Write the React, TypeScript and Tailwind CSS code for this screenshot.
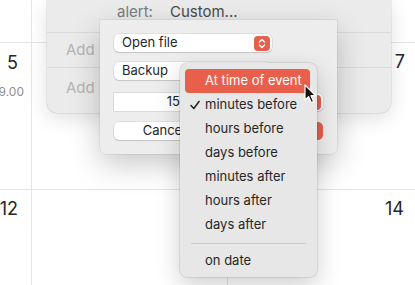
const menuItems = [
  "minutes before",
  "hours before",
  "days before",
  "minutes after",
  "hours after",
  "days after",
];

function Stepper() {
  return (
    <span className="flex h-[15px] w-[16px] items-center justify-center rounded-[4px] bg-[#e5604d]">
      <svg width="8" height="11" viewBox="0 0 8 11" fill="none" stroke="white" strokeWidth="1.4" strokeLinecap="round" strokeLinejoin="round">
        <path d="M1.5 4 L4 1.5 L6.5 4" />
        <path d="M1.5 7 L4 9.5 L6.5 7" />
      </svg>
    </span>
  );
}

function Popup({ label, className }: { label?: string; className: string }) {
  return (
    <div className={`flex h-[18px] items-center justify-between rounded-[5px] bg-white pl-[8px] pr-[2px] text-[13px] shadow-[0_0_0_0.5px_rgba(0,0,0,0.12),0_1px_1px_rgba(0,0,0,0.12)] ${className}`}>
      <span>{label}</span>
      <Stepper />
    </div>
  );
}

export default function App() {
  return (
    <div className="relative h-[285px] w-[415px] overflow-hidden bg-white font-['Inter',sans-serif] text-[#262626]">
      {/* calendar month grid */}
      <div className="grid h-full grid-cols-[32px_196px_1fr] grid-rows-[43px_147px_1fr]">
        <div className="border-r border-b border-[#e6e6e6]" />
        <div className="border-r border-b border-[#e6e6e6]" />
        <div className="border-b border-[#e6e6e6]" />

        <div className="flex flex-col items-end border-r border-b border-[#e6e6e6] pt-[9px] pr-[13px]">
          <span className="text-[18px] leading-[22px]">5</span>
          <span className="mt-[10px] mr-[-6px] text-[12px] leading-[16px] text-[#8f8f8f]">19.00</span>
        </div>
        <div className="border-r border-b border-[#e6e6e6]" />
        <div className="flex justify-end border-b border-[#e6e6e6] pt-[8px] pr-[10px]">
          <span className="text-[18px] leading-[22px]">7</span>
        </div>

        <div className="flex justify-end border-r border-[#e6e6e6] pt-[8px] pr-[13px]">
          <span className="text-[18px] leading-[22px]">12</span>
        </div>
        <div className="border-r border-[#e6e6e6]" />
        <div className="flex justify-end pt-[8px] pr-[11px]">
          <span className="text-[18px] leading-[22px]">14</span>
        </div>
      </div>

      {/* event popover behind */}
      <div className="absolute top-0 left-[47px] flex h-[113px] w-[344px] flex-col rounded-b-[10px] bg-[#ebebeb] text-[15px] shadow-[0_0_0_0.5px_rgba(0,0,0,0.12),0_6px_20px_rgba(0,0,0,0.12)]">
        <div className="h-[33px] border-b border-[#dadada] pt-[3px] pl-[70px] leading-[18px]">
          <span className="text-[#7c7c7c]">alert:</span>
          <span className="ml-[17px] text-[#4a4a4a]">Custom...</span>
        </div>
        <div className="h-[35px] border-b border-[#dadada] pt-[8px] pl-[19px] leading-[18px] text-[#b4b4b4]">
          <div className="w-[34px] overflow-hidden whitespace-nowrap">Add Invitees</div>
        </div>
        <div className="flex-1 pt-[11px] pl-[19px] leading-[18px] text-[#b4b4b4]">
          <div className="w-[34px] overflow-hidden whitespace-nowrap">Add Item</div>
        </div>
      </div>

      {/* custom alert sheet */}
      <div className="absolute top-[20px] left-[100px] flex h-[134px] w-[237px] flex-col rounded-b-[6px] bg-[#ededed] pt-[14px] pl-[14px] shadow-[0_0_0_0.5px_rgba(0,0,0,0.1),0_10px_30px_rgba(0,0,0,0.22)]">
        <Popup label="Open file" className="w-[158px]" />
        <Popup label="Backup" className="mt-[10px] w-[158px]" />
        <div className="mt-[13px] flex gap-[6px]">
          <div className="flex h-[18px] w-[70px] items-center justify-end bg-white pr-[4px] text-[13px] shadow-[0_0_0_0.5px_rgba(0,0,0,0.15)]">15</div>
          <Popup className="w-[133px]" />
        </div>
        <div className="mt-[11px] flex gap-[9px] text-[13px]">
          <div className="flex h-[18px] w-[100px] items-center justify-center rounded-[5px] bg-white shadow-[0_0_0_0.5px_rgba(0,0,0,0.12),0_1px_1px_rgba(0,0,0,0.12)]">Cancel</div>
          <div className="h-[18px] w-[100px] rounded-[5px] bg-[#e5604d]" />
        </div>
      </div>

      {/* dropdown menu */}
      <div className="absolute top-[63px] left-[180px] w-[137px] rounded-[7px] bg-[#e7e7e7] pt-[6px] pb-[4px] text-[13px] shadow-[0_0_0_0.5px_rgba(0,0,0,0.16),0_8px_24px_rgba(0,0,0,0.2)]">
        <div className="mr-[7px] ml-[5px] flex h-[24px] items-center rounded-[4px] bg-[#e8604c] pl-[20px] text-white">At time of event</div>
        {menuItems.map((item, i) => (
          <div key={item} className="relative flex h-[24px] items-center pl-[25px]">
            {i === 0 && (
              <svg className="absolute left-[10px]" width="10" height="10" viewBox="0 0 10 10" fill="none" stroke="#262626" strokeWidth="1.6" strokeLinecap="round" strokeLinejoin="round">
                <path d="M1 5.5 L3.8 8.5 L9 1.5" />
              </svg>
            )}
            {item}
          </div>
        ))}
        <div className="flex h-[12px] items-center px-[11px]">
          <div className="h-px w-full bg-[#cacaca]" />
        </div>
        <div className="flex h-[24px] items-center pl-[25px]">on date</div>
      </div>

      {/* mouse pointer */}
      <svg className="absolute top-[84px] left-[304px]" width="13" height="20" viewBox="0 0 13 20">
        <path d="M1 1 L1 16 L4.6 12.6 L7.2 18.5 L9.6 17.5 L7 11.7 L11.8 11.7 Z" fill="#111" stroke="white" strokeWidth="1.2" strokeLinejoin="round" />
      </svg>
    </div>
  );
}
